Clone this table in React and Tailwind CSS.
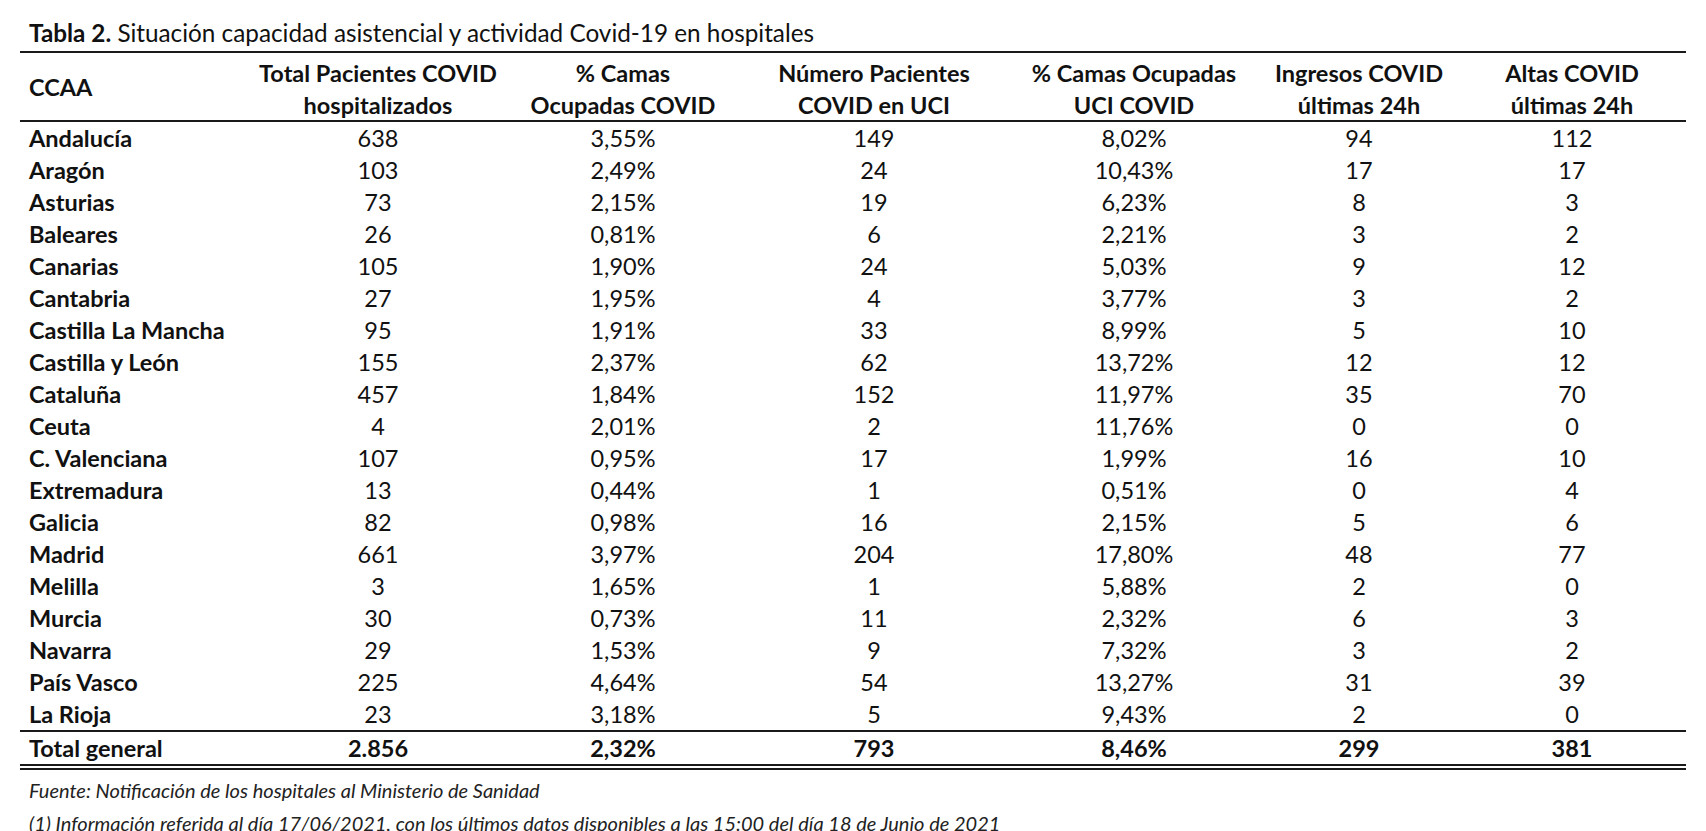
const rows = [
  ['Andalucía', '638', '3,55%', '149', '8,02%', '94', '112'],
  ['Aragón', '103', '2,49%', '24', '10,43%', '17', '17'],
  ['Asturias', '73', '2,15%', '19', '6,23%', '8', '3'],
  ['Baleares', '26', '0,81%', '6', '2,21%', '3', '2'],
  ['Canarias', '105', '1,90%', '24', '5,03%', '9', '12'],
  ['Cantabria', '27', '1,95%', '4', '3,77%', '3', '2'],
  ['Castilla La Mancha', '95', '1,91%', '33', '8,99%', '5', '10'],
  ['Castilla y León', '155', '2,37%', '62', '13,72%', '12', '12'],
  ['Cataluña', '457', '1,84%', '152', '11,97%', '35', '70'],
  ['Ceuta', '4', '2,01%', '2', '11,76%', '0', '0'],
  ['C. Valenciana', '107', '0,95%', '17', '1,99%', '16', '10'],
  ['Extremadura', '13', '0,44%', '1', '0,51%', '0', '4'],
  ['Galicia', '82', '0,98%', '16', '2,15%', '5', '6'],
  ['Madrid', '661', '3,97%', '204', '17,80%', '48', '77'],
  ['Melilla', '3', '1,65%', '1', '5,88%', '2', '0'],
  ['Murcia', '30', '0,73%', '11', '2,32%', '6', '3'],
  ['Navarra', '29', '1,53%', '9', '7,32%', '3', '2'],
  ['País Vasco', '225', '4,64%', '54', '13,27%', '31', '39'],
  ['La Rioja', '23', '3,18%', '5', '9,43%', '2', '0'],
]

const total = ['Total general', '2.856', '2,32%', '793', '8,46%', '299', '381']

const headers = [
  ['Total Pacientes COVID', 'hospitalizados'],
  ['% Camas', 'Ocupadas COVID'],
  ['Número Pacientes', 'COVID en UCI'],
  ['% Camas Ocupadas', 'UCI COVID'],
  ['Ingresos COVID', 'últimas 24h'],
  ['Altas COVID', 'últimas 24h'],
]

// fixed column widths so centers line up with the report layout
const cols = 'grid grid-cols-[230px_256px_234px_268px_252px_198px_228px]'

function Row({ cells, bold }) {
  return (
    <div className={`${cols} h-[32px] items-center`}>
      <div className="pl-[9px] font-bold whitespace-nowrap">{cells[0]}</div>
      {cells.slice(1).map((c, i) => (
        <div key={i} className={`text-center ${bold ? 'font-bold' : ''}`}>
          {c}
        </div>
      ))}
    </div>
  )
}

export default function App() {
  return (
    <div className="min-h-screen bg-white text-[#111] font-['Lato','Open_Sans',sans-serif] text-[23.5px] leading-[32px]">
      {/* Title */}
      <div className="pl-[29px] pt-[20px] pb-[5px] leading-[26px] text-[24.3px] whitespace-nowrap">
        <span className="font-bold">Tabla 2.</span> Situación capacidad asistencial y actividad Covid-19 en hospitales
      </div>

      <div className="ml-[20px] w-[1666px]">
        {/* Header */}
        <div className={`${cols} h-[71px] pt-[4px] border-t-2 border-b-2 border-[#1a1a1a] font-bold`}>
          <div className="pl-[9px] self-center -mt-[4px]">CCAA</div>
          {headers.map((h, i) => (
            <div key={i} className="text-center whitespace-nowrap">
              <div>{h[0]}</div>
              <div>{h[1]}</div>
            </div>
          ))}
        </div>

        {/* Body */}
        {rows.map((r) => (
          <Row key={r[0]} cells={r} />
        ))}

        {/* Total */}
        <div className="border-t-2 border-[#1a1a1a]">
          <Row cells={total} bold />
        </div>
        <div className="h-[6px] border-t-2 border-b-2 border-[#1a1a1a]" />
      </div>

      {/* Notes */}
      <div className="pl-[29px] pt-[8px] flex flex-col gap-[9px] italic text-[20px] leading-[24px] text-[#222] whitespace-nowrap">
        <div>Fuente: Notificación de los hospitales al Ministerio de Sanidad</div>
        <div>(1) Información referida al día 17/06/2021, con los últimos datos disponibles a las 15:00 del día 18 de Junio de 2021</div>
      </div>
    </div>
  )
}
